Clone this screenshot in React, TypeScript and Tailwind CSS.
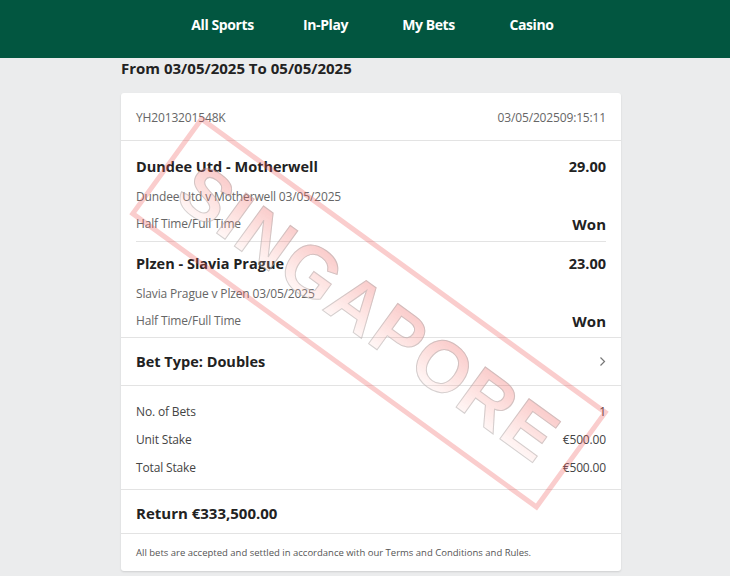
import React from 'react';

const navItems = ['All Sports', 'In-Play', 'My Bets', 'Casino'];

const Chevron: React.FC = () => (
  <svg width="7" height="11" viewBox="0 0 7 11" fill="none">
    <path d="M1.5 1.5 L5.5 5.5 L1.5 9.5" stroke="#777" strokeWidth="1.2" />
  </svg>
);

const Selection: React.FC<{ title: string; odds: string; event: string; first?: boolean }> = ({
  title,
  odds,
  event,
  first,
}) => (
  <div className={first ? 'pt-[14px] pb-[8px]' : 'pt-[10px] pb-[7px]'}>
    <div className="flex h-[24px] items-center justify-between text-[14.5px] font-bold text-[#222]">
      <span>{title}</span>
      <span>{odds}</span>
    </div>
    <div className="flex h-[36px] items-center text-[12px] tracking-[-0.15px] text-[#666]">{event}</div>
    <div className="flex h-[18px] items-center justify-between">
      <span className="text-[12px] tracking-[-0.15px] text-[#666]">Half Time/Full Time</span>
      <span className="text-[15px] font-bold text-[#222]">Won</span>
    </div>
  </div>
);

const StakeRow: React.FC<{ label: string; value: string }> = ({ label, value }) => (
  <div className="flex h-[28px] items-center justify-between text-[12px] tracking-[-0.15px] text-[#444]">
    <span>{label}</span>
    <span>{value}</span>
  </div>
);

export default function App() {
  return (
    <div
      className="min-h-[576px] w-full bg-[#ebeced]"
      style={{ fontFamily: '"Open Sans", "Noto Sans", sans-serif' }}
    >
      <header className="h-[58px] bg-[#025640] pt-[14px]">
        <nav className="ml-[171px] flex">
          {navItems.map((item) => (
            <span
              key={item}
              className="w-[103px] text-center text-[14px] font-bold tracking-[-0.4px] text-white"
            >
              {item}
            </span>
          ))}
        </nav>
      </header>

      <div className="ml-[121px] w-[500px]">
        <h1 className="mt-[-1px] flex h-[22px] items-center text-[15px] font-bold text-[#222]">
          From 03/05/2025 To 05/05/2025
        </h1>

        <div className="relative mt-[14px] overflow-hidden rounded-[3px] bg-white shadow-[0_1px_2px_rgba(0,0,0,0.12)]">
          <div className="flex h-[48px] items-center justify-between border-b border-[#e3e3e3] px-[15px] pt-[2px] text-[12px] tracking-[-0.15px] text-[#666]">
            <span>YH2013201548K</span>
            <span>03/05/202509:15:11</span>
          </div>

          <div className="px-[15px]">
            <div className="border-b border-[#e3e3e3]">
              <Selection first title="Dundee Utd - Motherwell" odds="29.00" event="Dundee Utd v Motherwell 03/05/2025" />
            </div>
          </div>
          <div className="border-b border-[#e3e3e3] px-[15px]">
            <Selection title="Plzen - Slavia Prague" odds="23.00" event="Slavia Prague v Plzen 03/05/2025" />
          </div>

          <div className="flex h-[48px] items-center justify-between border-b border-[#e3e3e3] px-[15px]">
            <span className="text-[14.5px] font-bold text-[#222]">Bet Type: Doubles</span>
            <Chevron />
          </div>

          <div className="border-b border-[#e3e3e3] px-[15px] pt-[12px] pb-[7px]">
            <StakeRow label="No. of Bets" value="1" />
            <StakeRow label="Unit Stake" value="€500.00" />
            <StakeRow label="Total Stake" value="€500.00" />
          </div>

          <div className="flex h-[44px] items-center border-b border-[#e3e3e3] px-[15px] pt-[3px] text-[15px] font-bold text-[#222]">
            Return €333,500.00
          </div>

          <div className="flex h-[37px] items-center px-[15px] pt-[2px] text-[9.5px] text-[#555]">
            All bets are accepted and settled in accordance with our Terms and Conditions and Rules.
          </div>

          {/* watermark stamp */}
          <div className="pointer-events-none absolute left-[-4px] top-[159px] flex h-[122px] w-[504px] rotate-[36deg] items-center justify-center border-[5px] border-[rgba(240,90,90,0.3)]">
            <span
              className="bg-gradient-to-b from-[rgba(235,80,80,0.35)] to-[rgba(255,255,255,0.15)] bg-clip-text text-[72px] font-bold leading-none tracking-[2px] text-transparent [-webkit-text-stroke:1px_rgba(170,170,170,0.5)]"
              style={{ fontFamily: '"Liberation Sans", Arial, sans-serif' }}
            >
              SINGAPORE
            </span>
          </div>
        </div>
      </div>
    </div>
  );
}
